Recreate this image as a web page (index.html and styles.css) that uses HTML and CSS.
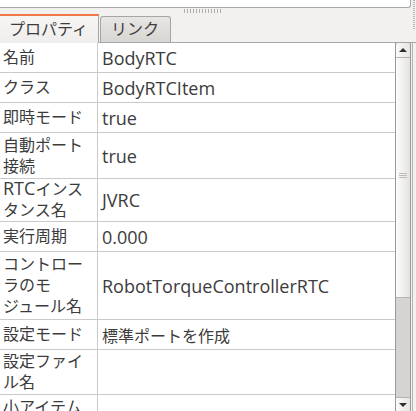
FILE: index.html
```html
<!DOCTYPE html>
<html lang="ja">
<head>
<meta charset="utf-8">
<link rel="stylesheet" href="styles.css">
</head>
<body>
<div class="window">
  <div class="topbox"></div>
  <div class="vgrip"></div>
  <div class="hgrip"></div>
  <div class="tabs">
    <div class="tab active">プロパティ</div>
    <div class="tab">リンク</div>
  </div>
  <div class="pane">
    <div class="table">
      <div class="row h30"><div class="k">名前</div><div class="v lat">BodyRTC</div></div>
      <div class="row h30"><div class="k">クラス</div><div class="v lat">BodyRTCItem</div></div>
      <div class="row h30"><div class="k">即時モード</div><div class="v lat">true</div></div>
      <div class="row h46"><div class="k">自動ポート<br>接続</div><div class="v lat">true</div></div>
      <div class="row h43"><div class="k"><span><span class="lat">RTC</span>インス<br>タンス名</span></div><div class="v lat">JVRC</div></div>
      <div class="row h30"><div class="k">実行周期</div><div class="v lat">0.000</div></div>
      <div class="row h68"><div class="k">コントロー<br>ラのモ<br>ジュール名</div><div class="v lat">RobotTorqueControllerRTC</div></div>
      <div class="row h30"><div class="k">設定モード</div><div class="v">標準ポートを作成</div></div>
      <div class="row h45"><div class="k">設定ファイ<br>ル名</div><div class="v"></div></div>
      <div class="row h46"><div class="k">小アイテム<br>&nbsp;</div><div class="v"></div></div>
    </div>
    <div class="scrollbar">
      <div class="btn up"><span class="tri-up"></span></div>
      <div class="thumb"><span class="grip"></span></div>
      <div class="trough"></div>
      <div class="btn down"><span class="tri-down"></span></div>
    </div>
    <div class="edge"></div>
  </div>
</div>
</body>
</html>
```
FILE: styles.css
```css
html, body {
  margin: 0;
  padding: 0;
  background: #f2f1f0;
  overflow: hidden;
}
body {
  width: 416px;
  height: 411px;
  font-family: "Open Sans", "Noto Sans CJK JP", sans-serif;
  font-size: 16px;
  color: #3c3c3c;
}
.lat {
  font-size: 18px;
}
.window {
  position: relative;
  height: 411px;
  display: flex;
  flex-direction: column;
}
.topbox {
  height: 7px;
  width: 410px;
  background: #fff;
  border-bottom: 1px solid #a9a9a9;
  border-right: 1px solid #a9a9a9;
  border-bottom-right-radius: 3px;
  flex: none;
}
.vgrip {
  position: absolute;
  left: 413px;
  top: 0;
  width: 2px;
  height: 30px;
  background: repeating-linear-gradient(to bottom, #b8b6b4 0 1px, transparent 1px 2px);
}
.hgrip {
  position: absolute;
  left: 184px;
  top: 9px;
  width: 38px;
  height: 4px;
  background: repeating-linear-gradient(to right, #b0aeac 0 1px, transparent 1px 3px);
}
.tabs {
  display: flex;
  align-items: flex-end;
  height: 35px;
  flex: none;
  border-bottom: 1px solid #a6a6a6;
  box-sizing: border-box;
}
.tab {
  box-sizing: border-box;
  height: 26px;
  line-height: 24px;
  padding: 0 11px 0 10px;
  background: linear-gradient(#e8e6e3, #d8d6d2);
  border: 1px solid #a6a6a6;
  border-bottom: none;
  border-radius: 3px 3px 0 0;
  margin-left: 1px;
  color: #3c3c3c;
  white-space: nowrap;
}
.tab.active {
  width: 99px;
  height: 29px;
  line-height: 26px;
  margin-left: 0;
  margin-bottom: -1px;
  padding: 0 0 0 9px;
  border: none;
  border-right: 1px solid #a6a6a6;
  border-top: 2px solid #f07746;
  border-radius: 0;
  background: linear-gradient(#f6f5f4, #efeeed);
}
.pane {
  flex: 1;
  display: flex;
  min-height: 0;
}
.table {
  width: 395px;
  background: #fff;
  flex: none;
  overflow: hidden;
}
.row {
  display: flex;
  border-bottom: 1px solid #cacaca;
  box-sizing: border-box;
  flex: none;
}
.h30 { height: 30px; }
.h43 { height: 43px; }
.h45 { height: 45px; }
.h46 { height: 46px; }
.h68 { height: 68px; }
.k {
  width: 98px;
  flex: none;
  box-sizing: border-box;
  border-right: 1px solid #cacaca;
  padding-left: 3px;
  display: flex;
  align-items: center;
  line-height: 21px;
  white-space: nowrap;
}
.k .lat {
  line-height: 15px;
}
.v {
  flex: 1;
  padding-left: 4px;
  display: flex;
  align-items: center;
  white-space: nowrap;
}
.scrollbar {
  width: 14px;
  flex: none;
  display: flex;
  flex-direction: column;
  border-left: 1px solid #9c9a98;
  border-right: 1px solid #9c9a98;
  background: #d6d4d2;
}
.btn {
  height: 15px;
  flex: none;
  background: linear-gradient(to right, #fafafa, #e6e5e4);
  display: flex;
  align-items: center;
  justify-content: center;
  box-sizing: border-box;
}
.btn.up {
  border-bottom: 1px solid #b5b3b1;
  border-radius: 3px 3px 0 0;
}
.btn.down {
  border-top: 1px solid #b5b3b1;
  height: 14px;
}
.tri-up {
  width: 0; height: 0;
  border-left: 4px solid transparent;
  border-right: 4px solid transparent;
  border-bottom: 4px solid #2e2e2e;
}
.tri-down {
  width: 0; height: 0;
  border-left: 4px solid transparent;
  border-right: 4px solid transparent;
  border-top: 4px solid #2e2e2e;
}
.thumb {
  height: 240px;
  flex: none;
  background: linear-gradient(to right, #fcfcfc, #e4e3e2);
  border-bottom: 1px solid #b5b3b1;
  display: flex;
  align-items: center;
  justify-content: center;
  box-sizing: border-box;
}
.grip {
  width: 8px;
  height: 5px;
  margin-top: -4px;
  background: repeating-linear-gradient(to bottom, #bdbbb9 0 1px, transparent 1px 2px);
}
.trough { flex: 1; }
.edge {
  width: 1px;
  margin-left: 1px;
  background: #b8b6b4;
  flex: none;
}
```
